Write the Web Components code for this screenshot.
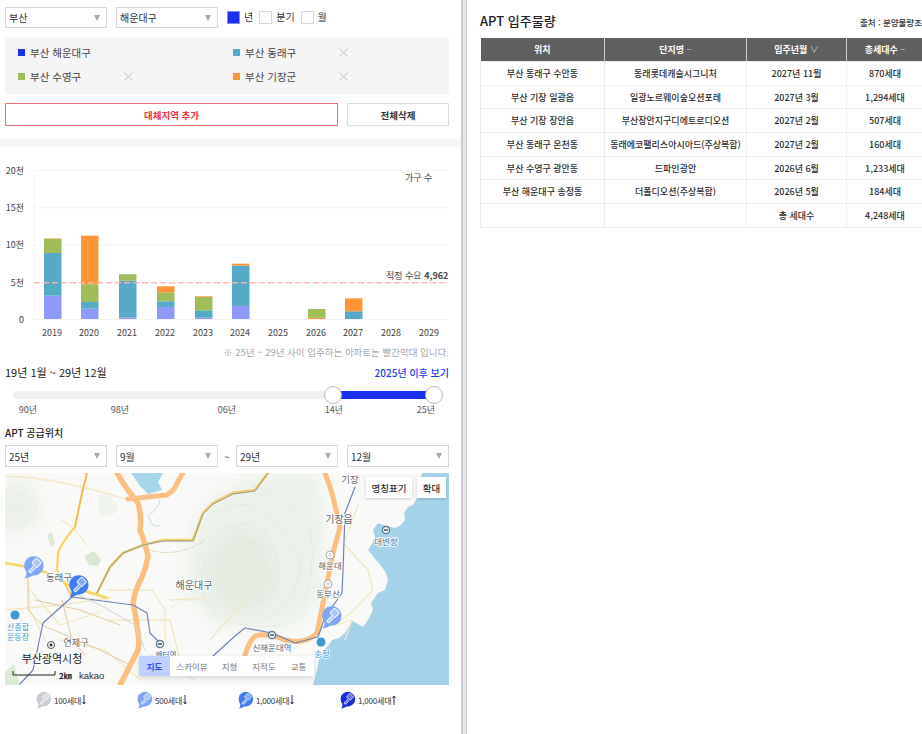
<!DOCTYPE html>
<html lang="ko">
<head>
<meta charset="utf-8">
<title>APT 입주물량</title>
<style>
  html, body { margin: 0; height: 100%; overflow: hidden; background: #fff; }
  body { font-family: "Noto Sans CJK KR", "Liberation Sans", sans-serif; color: #333; }
  .page { display: flex; height: 734px; width: 922px; overflow: hidden; }
  .divider { flex: none; width: 3px; background: #e6e6e8; border-left: 2px solid #cbcdd3; border-right: 1px solid #cbcdd3; }
</style>
</head>
<body>
<div class="page">
  <supply-panel></supply-panel>
  <div class="divider"></div>
  <move-in-panel></move-in-panel>
</div>

<script>
// little helpers, shadow root style and the map pin drawing
const css = (s) => `<style>${s}</style>`;
const PIN = `
  <path d="M12 22.2 C7.5 24.4 4.5 25.4 2.5 25.4 C4.2 23.4 5 21.5 4.9 18.6 A10.5 10.5 0 1 1 12 22.2 Z" fill="currentColor"/>
  <g stroke="#fff" stroke-opacity=".85" stroke-width="1.2" fill="#fff" fill-opacity=".35" stroke-linejoin="round">
    <rect x="12.2" y="4.8" width="7.4" height="7.4" rx="1" transform="rotate(45 15.9 8.5)"/>
    <path d="M12.6 12.2 L7.2 17.4 L9.2 19.4 L14.6 14.2"/>
  </g>`;
const pin = (size, color) =>
  `<svg width="${size}" height="${size}" viewBox="0 0 26 26" style="color:${color};display:block;flex:none">${PIN}</svg>`;

class SelectBox extends HTMLElement {
  connectedCallback() {
    const w = this.getAttribute('width') || 102;
    const h = this.getAttribute('height') || 21;
    this.attachShadow({ mode: 'open' }).innerHTML = css(`
      :host { display: flex; align-items: center; justify-content: space-between; box-sizing: border-box;
        width: ${w}px; height: ${h}px; border: 1px solid #d4d8dd; padding: 0 5px 0 3px; background: #fff;
        font-size: 10px; color: #333; flex: none; }
      i { width: 0; height: 0; border-left: 3.5px solid transparent; border-right: 3.5px solid transparent; border-top: 6px solid #a5a8ad; margin-right: 1px; }
    `) + `<span><slot></slot></span><i></i>`;
  }
}
customElements.define('select-box', SelectBox);

class PeriodCheck extends HTMLElement {
  connectedCallback() {
    const on = this.hasAttribute('checked');
    this.attachShadow({ mode: 'open' }).innerHTML = css(`
      :host { display: flex; align-items: center; gap: 4px; font-size: 10px; color: #333; flex: none; }
      b { display: block; box-sizing: border-box; width: 13px; height: 13px; border: 1px solid ${on ? '#7f8ff0' : '#d8d8d8'}; background: ${on ? '#1a32f0' : '#fff'}; }
      span { position: relative; top: -1px; }
    `) + `<b></b><span><slot></slot></span>`;
  }
}
customElements.define('period-check', PeriodCheck);

class RegionTag extends HTMLElement {
  connectedCallback() {
    const color = this.getAttribute('color');
    const x = this.hasAttribute('removable');
    this.attachShadow({ mode: 'open' }).innerHTML = css(`
      :host { display: flex; align-items: center; font-size: 10.5px; color: #444; height: 24px; }
      b { width: 7px; height: 7px; background: ${color}; margin-right: 5px; flex: none; }
      span { width: 94px; white-space: nowrap; flex: none; }
      svg { display: block; }
    `) + `<b></b><span><slot></slot></span>` +
      (x ? `<svg width="9" height="9" viewBox="0 0 9 9"><path d="M.5.5l8 8M8.5.5l-8 8" stroke="#bdbdbd" stroke-width="1" fill="none"/></svg>` : '');
  }
}
customElements.define('region-tag', RegionTag);

class SupplyChart extends HTMLElement {
  connectedCallback() {
    const colors = { p: '#8f98fb', b: '#55abc7', g: '#9fbd59', o: '#ff9534' };
    const bars = [
      [44, [['p', 295.7, 319], ['b', 253, 295.7], ['g', 239, 253], ['o', 238.4, 239]]],
      [81, [['p', 308.7, 319], ['b', 302, 308.7], ['g', 284.3, 302], ['o', 235.7, 284.3]]],
      [119, [['p', 317.3, 319], ['b', 280.7, 317.3], ['g', 274.3, 280.7]]],
      [157, [['p', 307, 319], ['b', 301.3, 307], ['g', 292.3, 301.3], ['o', 286.3, 292.3]]],
      [195, [['p', 317.7, 319], ['b', 310.3, 317.7], ['g', 297, 310.3], ['o', 296.3, 297]]],
      [232, [['p', 306, 319], ['b', 265.7, 306], ['o', 263.7, 265.7]]],
      [308, [['o', 317.7, 319], ['g', 309, 317.7]]],
      [345, [['b', 311.3, 319], ['o', 298.3, 311.3]]],
    ];
    const rects = bars.map(([x, parts]) => parts.map(([c, y1, y2]) =>
      `<rect x="${x}" y="${y1}" width="17.5" height="${(y2 - y1).toFixed(1)}" fill="${colors[c]}"/>`).join('')).join('');
    const ticks = [['20천', 170.5], ['15천', 207.8], ['10천', 245.2], ['5천', 282.5], ['0', 319.5]];
    const grid = ticks.map(([t, y]) =>
      `<text x="24" y="${y + 3}" text-anchor="end">${t}</text>` +
      `<line x1="34" x2="448" y1="${y}" y2="${y}" stroke="#f3f3f3"/>`).join('');
    const years = [52, 89, 127, 165, 203, 240, 278, 316, 353, 391, 429].map((x, i) =>
      `<text x="${x}" y="336" text-anchor="middle">${2019 + i}</text>`).join('');
    this.attachShadow({ mode: 'open' }).innerHTML = css(`
      :host { display: block; height: 200px; }
      svg { display: block; }
      text { font-size: 9px; fill: #444; font-family: "Noto Sans CJK KR", "Liberation Sans", sans-serif; }
    `) + `<svg width="461" height="200" viewBox="0 147 461 200">
      <line x1="34" x2="34" y1="170" y2="319" stroke="#f3f3f3"/>
      ${grid}${rects}
      <line x1="34" x2="448" y1="282.7" y2="282.7" stroke="#f9b6b0" stroke-width="1.5" stroke-dasharray="6 3" stroke-opacity=".9"/>
      <text x="405" y="181">가구 수</text>
      <text x="386" y="279">적정 수요 <tspan font-weight="700">4,962</tspan></text>
      ${years}
    </svg>`;
  }
}
customElements.define('supply-chart', SupplyChart);

class RangeSlider extends HTMLElement {
  connectedCallback() {
    const labels = [['90년', 28], ['98년', 120], ['06년', 227], ['14년', 334], ['25년', 426]];
    this.attachShadow({ mode: 'open' }).innerHTML = css(`
      :host { display: block; height: 35px; margin-top: 2px; position: relative; }
      .track { position: absolute; left: 13px; right: 19px; top: 9px; height: 8px; background: #f0f0f0; border-radius: 4px; }
      .fill { position: absolute; left: 333px; width: 100px; top: 9px; height: 8px; background: #1a32f0; }
      .knob { position: absolute; top: 4px; box-sizing: border-box; width: 18px; height: 18px; border: 1.5px solid #bbb; border-radius: 50%; background: #fff; }
      .tick { position: absolute; top: 21px; font-size: 9px; line-height: 14px; color: #555; transform: translateX(-50%); white-space: nowrap; }
    `) + `<div class="track"></div><div class="fill"></div>
      <div class="knob" style="left:324px"></div><div class="knob" style="left:425px"></div>
      ${labels.map(([t, x]) => `<span class="tick" style="left:${x}px">${t}</span>`).join('')}`;
  }
}
customElements.define('range-slider', RangeSlider);

class SupplyMap extends HTMLElement {
  connectedCallback() {
    const road = (d, c, w, extra = '') => `<path d="${d}" fill="none" stroke="${c}" stroke-width="${w}" stroke-linejoin="round" stroke-linecap="round" ${extra}/>`;
    const label = (x, y, t, s = 9.5, c = '#666', extra = '') =>
      `<text x="${x}" y="${y}" font-size="${s}" fill="${c}" text-anchor="middle" stroke="#fff" stroke-opacity=".8" stroke-width="2" paint-order="stroke" ${extra}>${t}</text>`;
    const pinAt = (x, y, c, s = 24) =>
      `<g transform="translate(${x} ${y}) scale(${s / 26})" style="color:${c}">${PIN}</g>`;
    const station = (x, y) => `<circle cx="${x}" cy="${y}" r="3.6" fill="#fff" stroke="#667c92" stroke-width="1.5"/><rect x="${x - 2}" y="${y - 1}" width="4" height="2" fill="#667c92"/>`;
    const ic = (x, y) => `<circle cx="${x}" cy="${y}" r="4" fill="#fff" stroke="#aaa"/><circle cx="${x}" cy="${y}" r="1.4" fill="none" stroke="#aaa" stroke-width=".6"/>`;
    // contour lines on the hills
    const contours = [
      'M205 520 Q225 500 250 505 Q285 525 300 560 Q300 600 265 620',
      'M215 535 Q240 515 265 530 Q285 560 275 590 Q255 610 230 605',
      'M228 550 Q248 535 262 550 Q270 575 250 592 Q228 595 220 575 Q220 560 228 550',
      'M240 480 Q280 490 310 530 Q318 570 300 610',
      'M205 560 Q195 590 215 615 Q240 630 285 625',
      'M5 500 Q20 490 35 500 Q40 515 20 525',
      'M5 512 Q15 505 25 510',
      'M240 565 Q250 555 256 568 Q252 582 242 578 Z',
      'M195 600 Q170 600 160 620',
    ].map(d => road(d, '#dfe8dc', .7)).join('');
    const minor = [
      'M5 476 Q60 478 128 500', 'M62 520 Q75 528 87 545', 'M30 590 L60 625 L100 612',
      'M5 610 L60 605 L110 598', 'M28 580 L30 610 L45 640', 'M60 640 L105 650 L140 680',
      'M108 590 L152 590 L165 610 L165 640', 'M110 620 L170 620 L180 660', 'M170 600 L205 598',
      'M345 545 L368 570 L373 590 L352 612 L335 625', 'M345 540 L358 505', 'M335 625 L352 620 L345 640',
      'M210 640 L245 600', 'M150 655 L195 680',
    ].map(d => road(d, '#f3e7c4', 1.3)).join('');
    const brown = [
      'M28 578 L28 610 L42 625 L100 650 L130 665', 'M35 600 L80 610 L120 625', 'M62 600 L72 640 L85 655',
    ].map(d => road(d, '#dccb9e', 1)).join('');
    this.attachShadow({ mode: 'open' }).innerHTML = css(`
      :host { display: block; position: relative; height: 212px; width: 444px; overflow: hidden; margin-left: 5px; background: #f8f8f6; }
      svg { display: block; font-family: "Noto Sans CJK KR", "Liberation Sans", sans-serif; }
      .btn { position: absolute; top: 4px; height: 21px; display: flex; align-items: center; justify-content: center; background: #fff; font-size: 9.5px; color: #333; box-shadow: 0 1px 3px rgba(0,0,0,.18); font-weight: 500; }
      .types { position: absolute; left: 134px; top: 183px; width: 175px; height: 20px; display: flex; background: #fff; font-size: 8.5px; color: #777; box-shadow: 0 2px 5px rgba(0,0,0,.15); }
      .types span { display: flex; align-items: center; justify-content: center; white-space: nowrap; }
      .types .on { background: #bdd0ff; color: #2f4df0; font-weight: 700; }
    `) + `<svg width="444" height="212" viewBox="5 473 444 212">
      <defs><filter id="soft" x="-20%" y="-20%" width="140%" height="140%"><feGaussianBlur stdDeviation="7"/></filter></defs>
      <rect x="5" y="473" width="444" height="212" fill="#f9f9f7"/>
      <g filter="url(#soft)">
        <path d="M200 510 Q230 480 270 473 L318 473 L325 520 L322 590 L300 625 L240 630 L205 618 L185 585 L190 540 Z" fill="#ecf2ea"/>
        <path d="M225 535 Q250 520 268 545 Q290 590 255 610 Q215 610 205 580 Q205 550 225 535 Z" fill="#e4ece1"/>
        <path d="M-5 480 L25 478 Q45 500 38 525 L-5 540 Z" fill="#ecf2ea"/>
      </g>
      <path d="M98 495 Q112 492 118 508 Q112 520 100 514 Z" fill="#eef3ec"/>
      <path d="M84 556 l10 -5 l7 9 l-3 6 l-9 -1 Z" fill="#d9e8d0"/>
      <path d="M47 535 l5 -3 l3 12 l-4 3 Z" fill="#dcebd4"/>
      <path d="M5 672 L14 664 L20 685 L5 685 Z" fill="#dcebd4"/>
      <path d="M131 473 L163 473 L158 482 L162 490 L148 494 L140 486 L136 480 Z" fill="#a6d6ec"/>
      <path d="M422 473 L449 473 L449 685 L313 685 L317 670 L319 660 L322 652 L328 646 L332 640 L339 638 L345 633 L349 626 L352 621 L358 624 L363 627 L368 620 L373 610 L371 603 L378 593 L385 590 L388 580 L386 573 L382 567 L376 560 L368 550 L372 544 L375 537 L373 530 L378 523 L387 526 L395 528 L401 525 L405 520 L404 513 L408 507 L413 505 L417 498 Z" fill="#a2d3ea"/>
      ${contours}${minor}${brown}
      ${road('M148 515 Q152 530 160 525 M160 500 Q158 510 150 514', '#bcdcf0', 1)}
      ${road('M117 473 Q124 486 138 503 Q142 516 140 530 Q146 545 148 557 Q146 568 142 577 Q135 590 133 603 Q136 616 137 627 Q140 640 138 650 L120 685', '#fbc07f', 5.5)}
      ${road('M128 499 L167 495 Q175 490 177 483 L183 473', '#fbc07f', 5)}
      ${road('M325 473 L332 493 L340 527 L333 553 L323 603 L317 633 Q305 645 285 640 Q268 632 255 636 Q245 645 242 672', '#fbc07f', 5)}
      ${road('M87 473 L82 493 L75 527 Q60 545 58 553 L57 570 L72 597', '#f8d262', 2.2)}
      ${road('M5 563 L28 567 L48 573 L72 587 L107 598', '#f7d463', 2.6)}
      ${road('M87 473 L82 493 L75 527', '#f09a4c', .7)}
      ${road('M97 593 L110 567 L123 553 L143 545 L163 540 L193 540 L203 513 L213 503 L233 493 L255 490 L268 473', '#f5cf63', 2.6)}
      ${road('M97 593 L110 567 L123 553 L143 545 L163 541 L193 541 L203 514 L213 504 L233 494 L255 491 L268 473', '#7f93a8', .9)}
      ${road('M143 548 Q175 560 205 540', '#d9c9a2', 1, 'stroke-dasharray="1 2"')}
      ${road('M72 597 L133 605 L147 613 L150 633 L160 643', '#6d84b8', 1.2)}
      ${road('M72 597 L43 623 L33 670 L20 684', '#6d84b8', 1.2)}
      ${road('M355 487 L345 513 L343 570 L342 593 L325 617 L318 637 L295 643 L272 633 L245 628 L235 636 L213 656', '#6d84b8', 1.2)}
      ${road('M68 590 L100 605 L135 625 L145 650', '#ccd6df', 1)}
      ${label(59, 581, '동래구')}
      ${label(76, 646, '연제구', 9)}
      ${label(194, 589, '해운대구', 10)}
      ${label(339, 523, '기장읍', 10)}
      ${label(350, 483, '기장')}
      ${label(386, 545, '대변항', 8.5, '#5b7c96')}
      ${label(330, 569, '해운대', 8.5)}
      ${label(328, 597, '동부산', 8.5)}
      ${label(272, 651, '신해운대역', 8.5, '#4d6e8a')}
      ${label(166, 658, '벡터역', 7.5, '#4d6e8a')}
      ${label(322, 657, '송정', 8.5, '#3d9ad0')}
      <text font-size="8" fill="#3d9ad0" text-anchor="middle" stroke="#fff" stroke-opacity=".8" stroke-width="2" paint-order="stroke"><tspan x="18" y="630">산종합</tspan><tspan x="18" y="640">운동장</tspan></text>
      ${label(52, 663, '부산광역시청', 11, '#222')}
      <circle cx="51" cy="645" r="3.5" fill="#fff" stroke="#555"/><circle cx="51" cy="645" r="1.5" fill="#333"/>
      <circle cx="15" cy="615" r="4.5" fill="#3d9ad0"/>
      <circle cx="321" cy="642" r="4.5" fill="#3d9ad0"/>
      ${station(386, 530)}${station(160, 644)}${station(272, 635)}
      ${ic(330, 555)}${ic(328, 584)}
      <path d="M13 671 V675 H55 V671" fill="none" stroke="#222"/>
      <text x="59" y="679" font-size="8" font-weight="700" fill="#222">2㎞</text>
      <text x="79" y="679" font-size="9.5" font-weight="500" fill="#333" font-family="'Liberation Sans', sans-serif">kakao</text>
      ${pinAt(22, 555, '#7ea6f5')}
      ${pinAt(67, 574, '#3f7cf0')}
      ${pinAt(320, 605, '#7ea6f5')}
    </svg>
    <div class="btn" style="left:361px;width:46px">명칭표기</div>
    <div class="btn" style="left:412px;width:29px">확대</div>
    <div class="types">
      <span class="on" style="width:31px">지도</span>
      <span style="width:44px">스카이뷰</span>
      <span style="width:31px">지형</span>
      <span style="width:38px">지적도</span>
      <span style="width:31px">교통</span>
    </div>`;
  }
}
customElements.define('supply-map', SupplyMap);

class MapLegend extends HTMLElement {
  connectedCallback() {
    const items = [['#c9ccd3', '100세대', 0, 35], ['#7ea6f5', '500세대', 0, 136], ['#3f7cf0', '1,000세대', 0, 237], ['#1a2ed6', '1,000세대', 1, 339]];
    const arrow = (up) => `<svg width="4" height="10" viewBox="0 0 4 10" style="flex:none;display:block"><path d="${up ? 'M2 10V1M.5 3L2 1l1.5 2' : 'M2 0v9M.5 7L2 9l1.5-2'}" fill="none" stroke="#334" stroke-width="1"/></svg>`;
    this.attachShadow({ mode: 'open' }).innerHTML = css(`
      :host { display: block; position: relative; height: 24px; font-size: 8px; letter-spacing: -.2px; color: #333; }
      div { position: absolute; top: 6px; display: flex; align-items: center; gap: 1px; white-space: nowrap; }
    `) + items.map(([c, t, up, x]) =>
      `<div style="left:${x}px">${pin(18, c)}<span>${t}</span>${arrow(up)}</div>`).join('');
  }
}
customElements.define('map-legend', MapLegend);

class SupplyPanel extends HTMLElement {
  connectedCallback() {
    this.attachShadow({ mode: 'open' }).innerHTML = css(`
      :host { display: block; width: 461px; flex: none; box-sizing: border-box; font-size: 10px; }
      .pad { padding: 0 12px 0 5px; }
      .filters { display: flex; align-items: center; gap: 9px; padding-top: 7px; height: 21px; }
      .filters period-check + period-check { margin-left: -3px; }
      .tags { margin-top: 9px; background: #f5f5f5; height: 57px; box-sizing: border-box; padding: 3px 0 4px 13px;
        display: grid; grid-template-columns: 215px 1fr; grid-auto-rows: 24px; }
      .actions { display: flex; gap: 9px; margin-top: 9px; }
      .btn { box-sizing: border-box; height: 23px; display: flex; align-items: center; justify-content: center; font-size: 9.5px; font-weight: 700; background: #fff; }
      .add { width: 333px; border: 1px solid #ef6f73; color: #f0323c; }
      .clear { flex: 1; border: 1px solid #ddd; color: #333; }
      .stripe { height: 8px; background: #f5f5f5; margin-top: 13px; }
      .note { font-size: 9.5px; color: #a5a9ae; text-align: right; padding-right: 12px; margin-top: -1px; line-height: 12px; height: 12px; white-space: nowrap; }
      .range { display: flex; justify-content: space-between; align-items: center; margin-top: 6px; height: 16px; }
      .range strong { font-size: 11px; font-weight: 400; color: #222; }
      .range a { font-size: 10px; font-weight: 500; color: #1a3cf0; }
      h3 { margin: 9px 0 0; font-size: 10px; font-weight: 500; color: #222; line-height: 14px; }
      .period { display: flex; align-items: center; gap: 9px; margin-top: 5px; margin-bottom: 6px; }
      .period span { width: 8px; margin: 0 -4px; text-align: center; color: #555; }
    `) + `
      <div class="pad">
        <div class="filters">
          <select-box>부산</select-box>
          <select-box>해운대구</select-box>
          <period-check checked>년</period-check>
          <period-check>분기</period-check>
          <period-check>월</period-check>
        </div>
        <div class="tags">
          <region-tag color="#1a32f0">부산 해운대구</region-tag>
          <region-tag color="#55abc7" removable>부산 동래구</region-tag>
          <region-tag color="#9fbd59" removable>부산 수영구</region-tag>
          <region-tag color="#ff9534" removable>부산 기장군</region-tag>
        </div>
        <div class="actions">
          <div class="btn add">대체지역 추가</div>
          <div class="btn clear">전체삭제</div>
        </div>
      </div>
      <div class="stripe"></div>
      <supply-chart></supply-chart>
      <div class="note">※ 25년 ~ 29년 사이 입주하는 아파트는 빨간막대 입니다.</div>
      <div class="pad">
        <div class="range"><strong>19년 1월 ~ 29년 12월</strong><a>2025년 이후 보기</a></div>
      </div>
      <range-slider></range-slider>
      <div class="pad">
        <h3>APT 공급위치</h3>
        <div class="period">
          <select-box height="22">25년</select-box>
          <select-box height="22">9월</select-box>
          <span>~</span>
          <select-box height="22">29년</select-box>
          <select-box height="22">12월</select-box>
        </div>
      </div>
      <supply-map></supply-map>
      <map-legend></map-legend>`;
  }
}
customElements.define('supply-panel', SupplyPanel);

class MoveInPanel extends HTMLElement {
  connectedCallback() {
    const rows = [
      ['부산 동래구 수안동', '동래롯데캐슬시그니처', '2027년 11월', '870세대'],
      ['부산 기장 일광읍', '일광노르웨이숲오션포레', '2027년 3월', '1,294세대'],
      ['부산 기장 장안읍', '부산장안지구디에트르디오션', '2027년 2월', '507세대'],
      ['부산 동래구 온천동', '동래에코팰리스아시아드(주상복합)', '2027년 2월', '160세대'],
      ['부산 수영구 광안동', '드파인광안', '2026년 6월', '1,233세대'],
      ['부산 해운대구 송정동', '더폴디오션(주상복합)', '2026년 5월', '184세대'],
      ['', '', '총 세대수', '4,248세대'],
    ];
    this.attachShadow({ mode: 'open' }).innerHTML = css(`
      :host { display: block; flex: 1; box-sizing: border-box; padding: 10px 0 0 13px; overflow: hidden; min-width: 0; }
      .top { display: flex; justify-content: space-between; align-items: center; height: 20px; width: 442px; }
      h2 { margin: 0; font-size: 13px; font-weight: 500; color: #222; }
      small { font-size: 8.5px; color: #333; font-weight: 500; white-space: nowrap; position: relative; top: 2px; }
      table { border-collapse: collapse; table-layout: fixed; width: 444px; margin-top: 8px; font-size: 9px; font-weight: 500; color: #2c2c2c; }
      th { background: #5f5f5f; color: #fff; height: 23px; padding: 0; font-weight: 700; border-right: 1px solid #ccc; }
      td { height: 22.7px; padding: 0; text-align: center; border: 1px solid #eee; border-left: 0; white-space: nowrap; }
      tr td:first-child { border-left: 1px solid #eee; }
      th em { font-style: normal; color: #c8c8c8; font-weight: 400; }
    `) + `
      <div class="top"><h2>APT 입주물량</h2><small>출처 : 분양물량조</small></div>
      <table>
        <colgroup><col style="width:124px"><col style="width:142px"><col style="width:100px"><col></colgroup>
        <thead><tr><th>위치</th><th>단지명 <em>−</em></th><th>입주년월 <em>∨</em></th><th>총세대수 <em>−</em></th></tr></thead>
        <tbody>${rows.map(r => `<tr>${r.map(c => `<td>${c}</td>`).join('')}</tr>`).join('')}</tbody>
      </table>`;
  }
}
customElements.define('move-in-panel', MoveInPanel);
</script>
</body>
</html>
